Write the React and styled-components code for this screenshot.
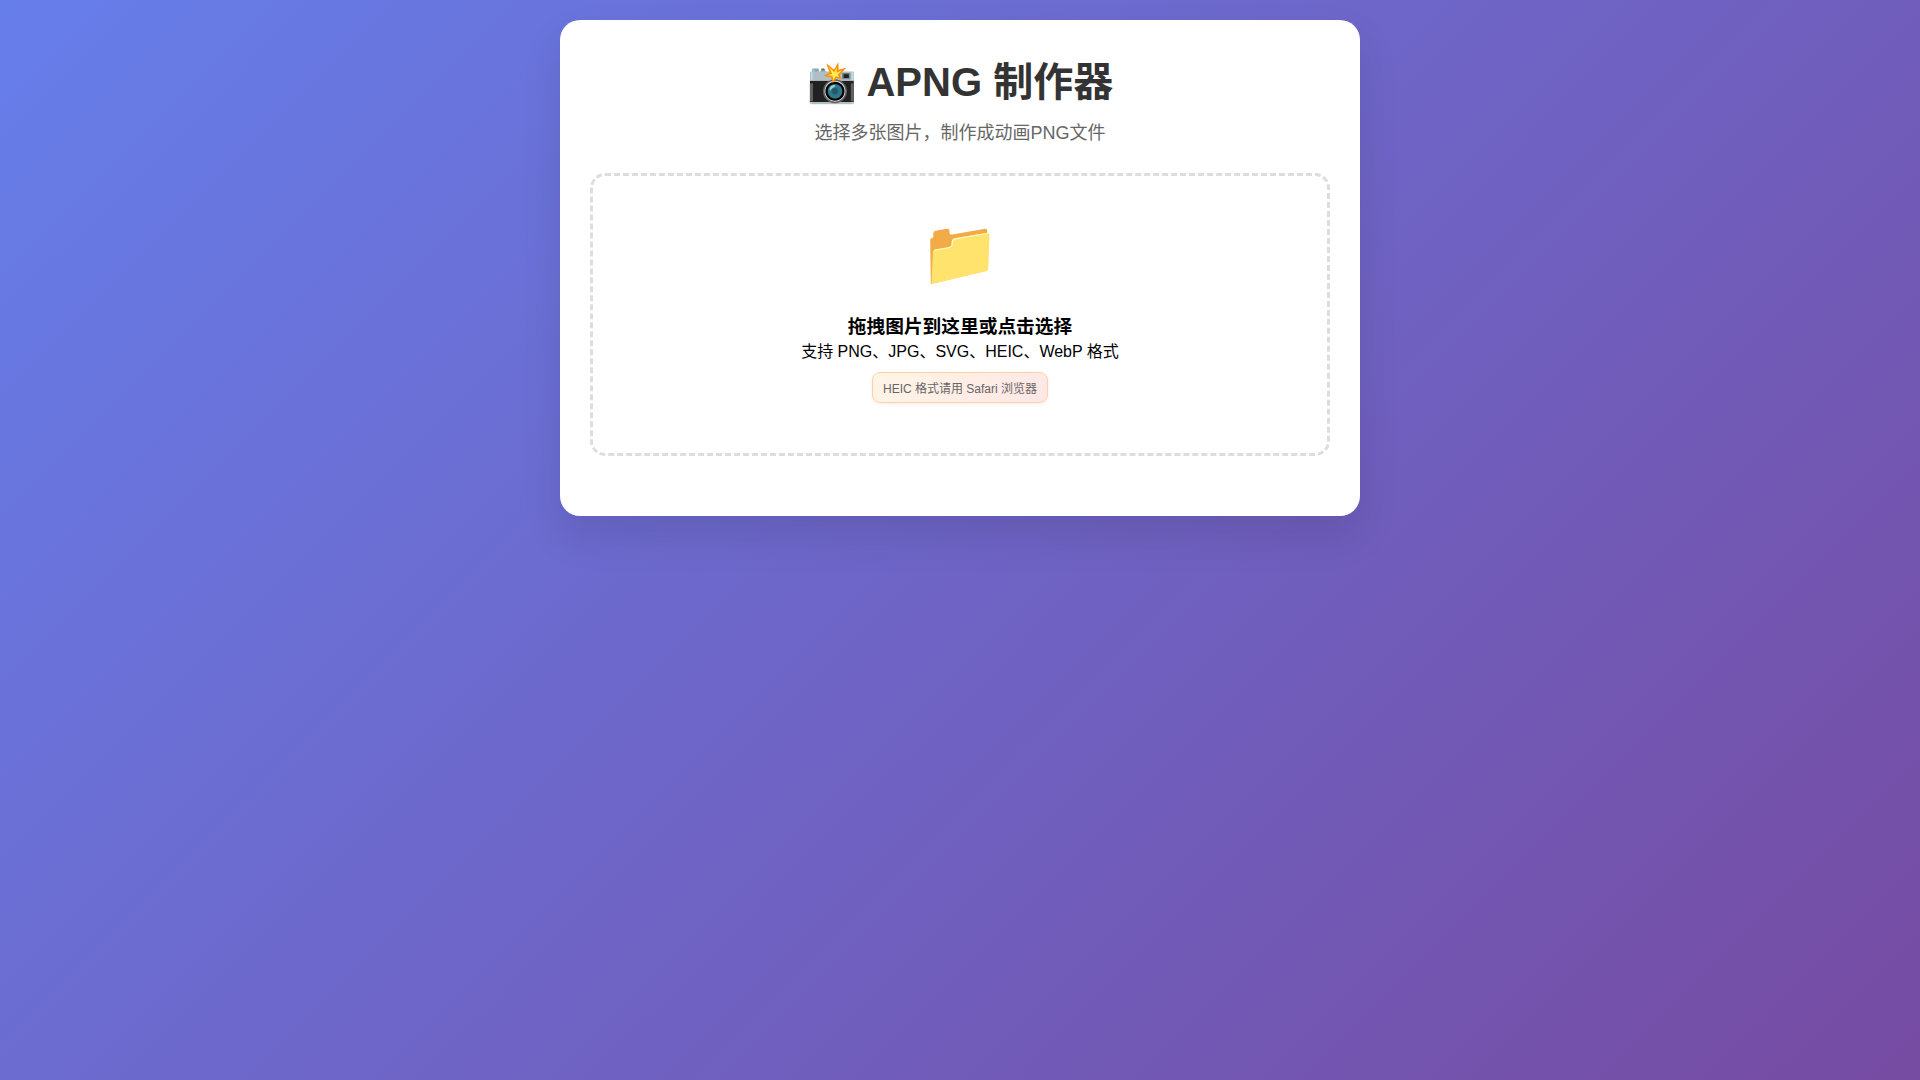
import { useRef, useState } from "react";
import styled, { createGlobalStyle } from "styled-components";

const GlobalStyle = createGlobalStyle`
    * {
        margin: 0;
        padding: 0;
        box-sizing: border-box;
    }

    body {
        font-family: "Liberation Sans", "Noto Sans CJK SC", sans-serif;
        background: linear-gradient(135deg, #667eea 0%, #764ba2 100%);
        min-height: 100vh;
        padding: 20px;
    }
`;

const Container = styled.main`
    max-width: 800px;
    margin: 0 auto;
    padding: 30px;
    background: white;
    border-radius: 20px;
    box-shadow: 0 20px 40px rgba(0, 0, 0, 0.1);
`;

const Header = styled.header`
    text-align: center;
    margin-bottom: 25px;

    h1 {
        color: #333;
        font-size: 40px;
        margin-bottom: 10px;
    }

    p {
        color: #666;
        font-size: 18px;
        line-height: 30px;
    }
`;

const UploadArea = styled.section`
    border: 3px dashed ${({ $dragging }) => ($dragging ? "#667eea" : "#ddd")};
    border-radius: 15px;
    padding: 40px;
    margin-bottom: 30px;
    text-align: center;
    cursor: pointer;

    input {
        display: none;
    }
`;

const UploadIcon = styled.div`
    font-size: 64px;
    margin-bottom: 20px;
`;

const FormatNote = styled.p`
    display: inline-block;
    margin: 10px 0;
    padding: 6px 10px;
    color: #666;
    font-size: 12px;
    background: linear-gradient(135deg, #fff5e6, #ffe6e6);
    border: 1px solid #ffd0a0;
    border-radius: 8px;
    box-shadow: 0 2px 4px rgba(0, 0, 0, 0.05);
`;

const App = () => {
    const fileInput = useRef(null);
    const [dragging, setDragging] = useState(false);

    const handleDragOver = (e) => {
        e.preventDefault();
        setDragging(true);
    };

    const handleDrop = (e) => {
        e.preventDefault();
        setDragging(false);
    };

    return (
        <>
            <GlobalStyle />
            <Container>
                <Header>
                    <h1>📸 APNG 制作器</h1>
                    <p>选择多张图片，制作成动画PNG文件</p>
                </Header>
                <UploadArea
                    $dragging={dragging}
                    onClick={() => fileInput.current.click()}
                    onDragOver={handleDragOver}
                    onDragLeave={() => setDragging(false)}
                    onDrop={handleDrop}
                >
                    <UploadIcon>📁</UploadIcon>
                    <h3 id="upload-title">拖拽图片到这里或点击选择</h3>
                    <p>支持 PNG、JPG、SVG、HEIC、WebP 格式</p>
                    <FormatNote>HEIC 格式请用 Safari 浏览器</FormatNote>
                    <input
                        ref={fileInput}
                        type="file"
                        aria-labelledby="upload-title"
                        accept="image/*,.heic"
                        multiple
                        onClick={(e) => e.stopPropagation()}
                    />
                </UploadArea>
            </Container>
        </>
    );
};

export default App;
